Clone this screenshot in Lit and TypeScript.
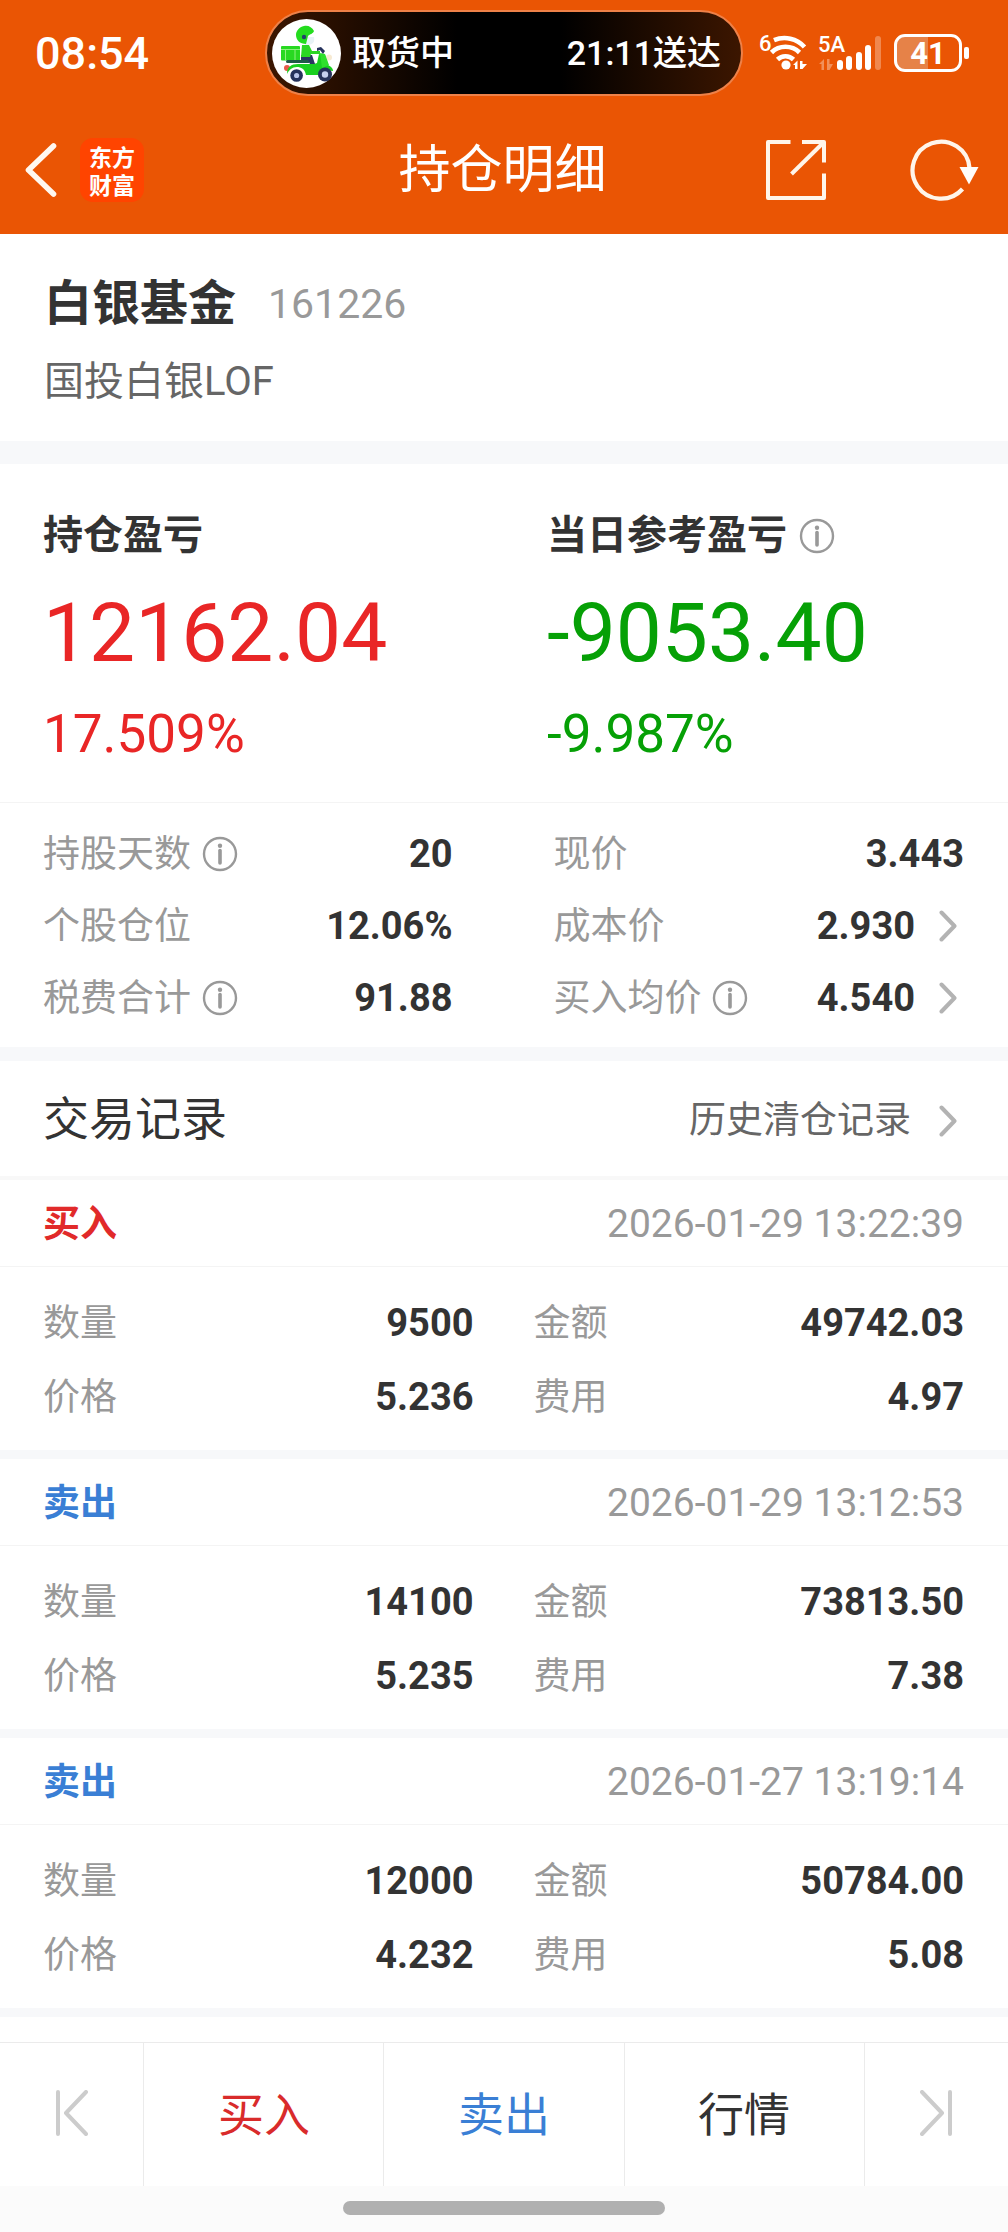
import { LitElement, html, css, svg, nothing } from "lit";
import { customElement, property } from "lit/decorators.js";
import { classMap } from "lit/directives/class-map.js";

const infoIcon = html`<svg class="info" viewBox="0 0 36 36" aria-hidden="true">
  <circle cx="18" cy="18" r="16" fill="none" stroke="#999" stroke-width="2.4" />
  <circle cx="18" cy="9.8" r="2.2" fill="#999" />
  <path d="M18 14.5V27" stroke="#999" stroke-width="3.6" stroke-linecap="round" />
</svg>`;

const chevronIcon = html`<svg class="chevron" viewBox="0 0 18 32" aria-hidden="true">
  <path d="M2.5 2.5L15.5 16L2.5 29.5" fill="none" stroke="#b3b3b3" stroke-width="4" stroke-linecap="round" stroke-linejoin="round" />
</svg>`;

const courierIcon = html`<svg class="courier" viewBox="0 0 69 69" aria-hidden="true">
  <circle cx="34.500" cy="34.500" r="34.500" fill="#fff" />
  <circle cx="57" cy="38.500" r="3" fill="#f7ead2" />
  <circle cx="15" cy="49" r="3" fill="#e8584a" />
  <circle cx="24.600" cy="56.500" r="6.300" fill="#26325c" />
  <circle cx="24.600" cy="56.500" r="2.600" fill="#b9c4ea" />
  <path d="M15 55c0-7 4-10 11-10h16l3-1 2-9 6 1 3 10c4 2 5 4 5 6l-9-1-6 5H34c-1-6-5-8-9-8-5 0-8 3-10 7z" fill="#19cf1f" />
  <path d="M48 34l5 1 4 11-7 3z" fill="#2ee02c" />
  <circle cx="53" cy="55.500" r="7" fill="#26325c" />
  <circle cx="53" cy="55.500" r="3.200" fill="#c5cff0" />
  <rect x="9" y="27" width="19" height="14.500" rx="1" fill="#28d921" />
  <path d="M9 30.500h19M13.500 31v10M23 31v10" stroke="#8ff07e" stroke-width="1" />
  <rect x="14" y="41" width="24" height="3" rx="1.500" fill="#1f5a48" />
  <path d="M29 36h11l3 9h-5l-2-4h-7z" fill="#2a3560" />
  <path d="M30 26h7l3 6h8v3h-9l-1 3h-9z" fill="#2bd622" />
  <path d="M45 29l4-1 4 4-2 3-3-4-3 1z" fill="#26325c" />
  <path d="M33 18h9c1 5-1 7-5 8h-4z" fill="#e8f3f6" />
  <path d="M42 12c-2-4-6-6-10-5-5 1-8 5-8 9 0 5 4 9 10 9l2-8c2-2 5-2 6-5z" fill="#24dc1e" />
  <circle cx="32" cy="18" r="2.200" fill="#24406a" />
</svg>`;

const wifiIcon = html`<svg class="wifi" viewBox="0 0 50 40" aria-hidden="true">
  <g fill="none" stroke="#fff" stroke-width="4.600" stroke-linecap="butt">
    <path d="M15 7.200A27 27 0 0 1 45.500 14" />
    <path d="M12.500 19.500A20 20 0 0 1 40.500 19.500" />
    <path d="M18.500 26.500A11.500 11.500 0 0 1 34.500 26.500" />
  </g>
  <circle cx="27" cy="32" r="4.600" fill="#fff" />
  <path d="M34 32l4.500-4.500v8.500h-2.500v-4zM41 28h2.500v3h4.500l-4.500 5h-2.500z" fill="#fff" />
</svg>`;

const bars = [
  { x: 19, top: 26, faded: false },
  { x: 28, top: 22, faded: false },
  { x: 38, top: 18, faded: false },
  { x: 47, top: 11, faded: false },
  { x: 57, top: 2, faded: true },
];
const signalIcon = html`<svg class="signal" viewBox="0 0 64 38" aria-hidden="true">
  ${bars.map(
    (b) => svg`<rect x=${b.x} y=${b.top} width="6" height=${36 - b.top} rx="3" fill="#fff" opacity=${b.faded ? 0.3 : 1} />`
  )}
  <path d="M1 30l5-5v11H3.500v-6zM9 25h2.500v5H15l-3.500 6H9z" fill="#fff" opacity="0.35" />
</svg>`;

const backIcon = html`<svg class="back" viewBox="0 0 32 54" aria-hidden="true">
  <path d="M28.500 3L3.500 27L28.500 51" fill="none" stroke="#fff8f0" stroke-width="5.600" stroke-linecap="round" stroke-linejoin="round" />
</svg>`;

const shareIcon = html`<svg class="tool" viewBox="0 0 64 64" aria-hidden="true">
  <g fill="none" stroke="#fff5ea" stroke-width="4" stroke-linejoin="round">
    <path d="M26.500 4H4V60H60V35.500" />
    <path d="M38 4H60V24.500" />
    <path d="M59 5L27.500 36" />
  </g>
</svg>`;

const refreshIcon = html`<svg class="tool wide" viewBox="0 0 72 64" aria-hidden="true">
  <path d="M54.500 51A28.500 28.500 0 1 1 61.500 30" fill="none" stroke="#fff5ea" stroke-width="4.200" />
  <path d="M51.500 29H70.500L61 46.500z" fill="#fffdfa" />
</svg>`;

const edgeIcon = (flip: boolean) => html`<svg class=${classMap({ edge: true, flip })} viewBox="0 0 32 46" aria-hidden="true">
  <path d="M2 2V44M30 2L10 23L30 44" fill="none" stroke="#ccc" stroke-width="4" stroke-linecap="round" stroke-linejoin="round" />
</svg>`;

const shared = css`
  * {
    box-sizing: border-box;
  }
  button,
  a {
    border: 0;
    padding: 0;
    margin: 0;
    background: none;
    font: inherit;
    color: inherit;
    text-decoration: none;
    cursor: pointer;
  }
  svg {
    display: block;
    flex: none;
  }
  h1,
  h2,
  p,
  dl,
  dd,
  dt {
    margin: 0;
    font-weight: 400;
  }
`;

interface Trade {
  side: "buy" | "sell";
  time: string;
  quantity: string;
  amount: string;
  price: string;
  fee: string;
}

@customElement("trade-record")
class TradeRecord extends LitElement {
  @property({ attribute: false }) trade!: Trade;

  static styles = [
    shared,
    css`
      :host {
        display: block;
        border-bottom: 9px solid #f7f8fa;
      }
      .head {
        display: flex;
        align-items: center;
        justify-content: space-between;
        height: 87px;
        padding: 2px 44px 0 43px;
        border-bottom: 1px solid #f4f4f4;
      }
      .side {
        font-size: 37px;
        font-weight: 700;
      }
      .buy {
        color: #e12a2a;
      }
      .sell {
        color: #3a7fd5;
      }
      time {
        font-size: 39px;
        color: #999;
      }
      .grid {
        display: grid;
        grid-template-columns: 1fr 1fr;
        column-gap: 60px;
        padding: 19px 44px 16px 43px;
      }
      .grid div {
        display: flex;
        align-items: center;
        justify-content: space-between;
        height: 74px;
      }
      dt {
        font-size: 37px;
        color: #999;
      }
      dd {
        font-size: 38px;
        font-weight: 700;
        color: #333;
      }
    `,
  ];

  render() {
    const t = this.trade;
    const cells = [
      ["数量", t.quantity],
      ["金额", t.amount],
      ["价格", t.price],
      ["费用", t.fee],
    ];
    return html`
      <div class="head">
        <span class="side ${t.side}">${t.side === "buy" ? "买入" : "卖出"}</span>
        <time>${t.time}</time>
      </div>
      <dl class="grid">
        ${cells.map(([k, v]) => html`<div><dt>${k}</dt><dd>${v}</dd></div>`)}
      </dl>
    `;
  }
}

interface Stat {
  label: string;
  value: string;
  info?: boolean;
  link?: boolean;
}

@customElement("app-root")
class AppRoot extends LitElement {
  private stats: Stat[] = [
    { label: "持股天数", value: "20", info: true },
    { label: "现价", value: "3.443" },
    { label: "个股仓位", value: "12.06%" },
    { label: "成本价", value: "2.930", link: true },
    { label: "税费合计", value: "91.88", info: true },
    { label: "买入均价", value: "4.540", info: true, link: true },
  ];

  private trades: Trade[] = [
    { side: "buy", time: "2026-01-29 13:22:39", quantity: "9500", amount: "49742.03", price: "5.236", fee: "4.97" },
    { side: "sell", time: "2026-01-29 13:12:53", quantity: "14100", amount: "73813.50", price: "5.235", fee: "7.38" },
    { side: "sell", time: "2026-01-27 13:19:14", quantity: "12000", amount: "50784.00", price: "4.232", fee: "5.08" },
  ];

  static styles = [
    shared,
    css`
      :host {
        display: flex;
        flex-direction: column;
        min-height: 100vh;
        background: #fff;
        color: #333;
        font-family: Roboto, "Noto Sans CJK SC", sans-serif;
        line-height: 1;
      }
      .top {
        background: #ea5504;
        color: #fff;
      }
      .status {
        display: grid;
        grid-template-columns: 1fr 478px 1fr;
        align-items: center;
        height: 106px;
      }
      .clock {
        padding-left: 35px;
        font-size: 45px;
        font-weight: 500;
      }
      .island {
        display: flex;
        align-items: center;
        height: 86px;
        padding: 0 20px 0 5px;
        border: 2px solid #ee8148;
        border-radius: 43px;
        background: linear-gradient(90deg, #3c1600, #000 40%, #000 62%, #3c1600);
        font-size: 34px;
        font-weight: 500;
      }
      .island .eta {
        margin-left: auto;
      }
      .courier {
        width: 69px;
        height: 69px;
        margin-right: 11px;
      }
      .radios {
        display: flex;
        align-items: center;
        justify-content: flex-end;
        padding-right: 39px;
      }
      .wifi-box,
      .signal-box {
        position: relative;
      }
      .tag {
        position: absolute;
        top: 0;
        left: 0;
        font-size: 22px;
        font-weight: 500;
      }
      .wifi {
        width: 50px;
        height: 40px;
      }
      .signal {
        width: 64px;
        height: 38px;
      }
      .signal-box {
        margin-left: 9px;
      }
      .battery {
        display: flex;
        align-items: center;
        justify-content: center;
        width: 68px;
        height: 38px;
        margin-left: 12px;
        border: 3px solid #fff;
        border-radius: 11px;
        background: linear-gradient(90deg, #e68248 50%, transparent 50%);
        font-size: 31px;
        font-weight: 700;
      }
      .nub {
        width: 5px;
        height: 12px;
        margin-left: 2px;
        border-radius: 2px;
        background: #fff;
      }
      .bar {
        display: grid;
        grid-template-columns: 1fr auto 1fr;
        align-items: center;
        height: 128px;
        padding: 0 28px 0 25px;
      }
      .bar h1 {
        font-size: 52px;
        line-height: 56px;
        padding-top: 2px;
      }
      .left,
      .right {
        display: flex;
        align-items: center;
      }
      .right {
        justify-content: flex-end;
        gap: 80px;
      }
      .back {
        width: 32px;
        height: 54px;
      }
      .brand {
        width: 64px;
        height: 64px;
        margin-left: 23px;
        padding: 4px 0;
        border-radius: 13px;
        background: #ff4400;
        font-family: "Noto Sans CJK SC", sans-serif;
        font-size: 23px;
        font-weight: 700;
        line-height: 28px;
        text-align: center;
      }
      .tool {
        width: 64px;
        height: 64px;
      }
      .wide {
        width: 72px;
      }
      .fund {
        height: 230px;
        padding: 42px 44px 0;
        border-bottom: 23px solid #f7f8fa;
      }
      .name {
        display: flex;
        align-items: center;
        gap: 32px;
        height: 56px;
      }
      .name h2 {
        font-size: 48px;
        font-weight: 700;
      }
      .name span {
        font-size: 41px;
        color: #999;
      }
      .full {
        margin-top: 30px;
        font-size: 40px;
        color: #666;
      }
      .profit {
        display: grid;
        grid-template-columns: 1fr 1fr;
        height: 339px;
        padding: 52px 0 0 43px;
        column-gap: 43px;
        border-bottom: 1px solid #f4f4f4;
      }
      .profit dt {
        display: flex;
        align-items: center;
        gap: 12px;
        height: 40px;
        font-size: 40px;
        font-weight: 700;
      }
      .big {
        margin-top: 36px;
        font-size: 82px;
      }
      .pct {
        margin-top: 34px;
        font-size: 53px;
      }
      .up {
        color: #e92626;
      }
      .down {
        color: #06a006;
      }
      .info {
        width: 36px;
        height: 36px;
      }
      .stats {
        display: grid;
        grid-template-columns: 409fr 410fr;
        column-gap: 101px;
        padding: 15px 44px 13px 43px;
        border-bottom: 14px solid #f7f8fa;
      }
      .stats div {
        display: flex;
        align-items: center;
        height: 72px;
      }
      .stats dt {
        display: flex;
        align-items: center;
        gap: 11px;
        font-size: 37px;
        color: #999;
      }
      .stats dd {
        margin-left: auto;
        font-size: 38px;
        font-weight: 700;
      }
      .go {
        display: flex;
        align-items: center;
        gap: 24px;
        padding-right: 7px;
      }
      .chevron {
        width: 18px;
        height: 32px;
      }
      .history {
        display: flex;
        align-items: center;
        justify-content: space-between;
        height: 119px;
        padding: 0 44px 0 43px;
        border-bottom: 4px solid #f8f8f8;
      }
      .history h2 {
        font-size: 46px;
      }
      .history .go {
        gap: 28px;
        padding-top: 4px;
        font-size: 37px;
        color: #666;
      }
      .tabs {
        display: flex;
        height: 144px;
        margin-top: auto;
        border-top: 1px solid #ebebeb;
      }
      .tabs button {
        display: flex;
        flex: 5 1 0;
        align-items: center;
        justify-content: center;
        border-left: 1px solid #ebebeb;
        font-size: 46px;
      }
      .tabs .side {
        flex-grow: 3;
        padding-bottom: 4px;
      }
      .tabs button:first-child {
        border-left: 0;
      }
      .buy {
        color: #d92b2b;
      }
      .sell {
        color: #3a7fd5;
      }
      .edge {
        width: 32px;
        height: 46px;
      }
      .flip {
        transform: scaleX(-1);
      }
      .gesture {
        display: flex;
        justify-content: center;
        height: 46px;
        padding-top: 15px;
        background: #fbfbfb;
      }
      .gesture span {
        width: 32%;
        height: 14px;
        border-radius: 7px;
        background: #b0b0b0;
      }
    `,
  ];

  render() {
    return html`
      <header class="top">
        <div class="status">
          <span class="clock">08:54</span>
          <div class="island">${courierIcon}<span>取货中</span><span class="eta">21:11送达</span></div>
          <div class="radios">
            <div class="wifi-box"><span class="tag">6</span>${wifiIcon}</div>
            <div class="signal-box"><span class="tag">5A</span>${signalIcon}</div>
            <span class="battery">41</span><span class="nub"></span>
          </div>
        </div>
        <div class="bar">
          <div class="left">
            <button aria-label="返回">${backIcon}</button>
            <a class="brand" href="#">东方<br />财富</a>
          </div>
          <h1>持仓明细</h1>
          <div class="right">
            <button aria-label="分享">${shareIcon}</button>
            <button aria-label="刷新">${refreshIcon}</button>
          </div>
        </div>
      </header>

      <section class="fund">
        <div class="name"><h2>白银基金</h2><span>161226</span></div>
        <p class="full">国投白银LOF</p>
      </section>

      <dl class="profit">
        <div>
          <dt>持仓盈亏</dt>
          <dd class="big up">12162.04</dd>
          <dd class="pct up">17.509%</dd>
        </div>
        <div>
          <dt>当日参考盈亏<button aria-label="说明">${infoIcon}</button></dt>
          <dd class="big down">-9053.40</dd>
          <dd class="pct down">-9.987%</dd>
        </div>
      </dl>

      <dl class="stats">
        ${this.stats.map(
          (s) => html`<div>
            <dt>${s.label}${s.info ? html`<button aria-label="说明">${infoIcon}</button>` : nothing}</dt>
            <dd>${s.link ? html`<a class="go" href="#">${s.value}${chevronIcon}</a>` : s.value}</dd>
          </div>`
        )}
      </dl>

      <div class="history">
        <h2>交易记录</h2>
        <a class="go" href="#">历史清仓记录${chevronIcon}</a>
      </div>

      ${this.trades.map((t) => html`<trade-record .trade=${t}></trade-record>`)}

      <nav class="tabs">
        <button class="side" aria-label="上一只">${edgeIcon(false)}</button>
        <button class="buy">买入</button>
        <button class="sell">卖出</button>
        <button>行情</button>
        <button class="side" aria-label="下一只">${edgeIcon(true)}</button>
      </nav>
      <div class="gesture"><span></span></div>
    `;
  }
}
